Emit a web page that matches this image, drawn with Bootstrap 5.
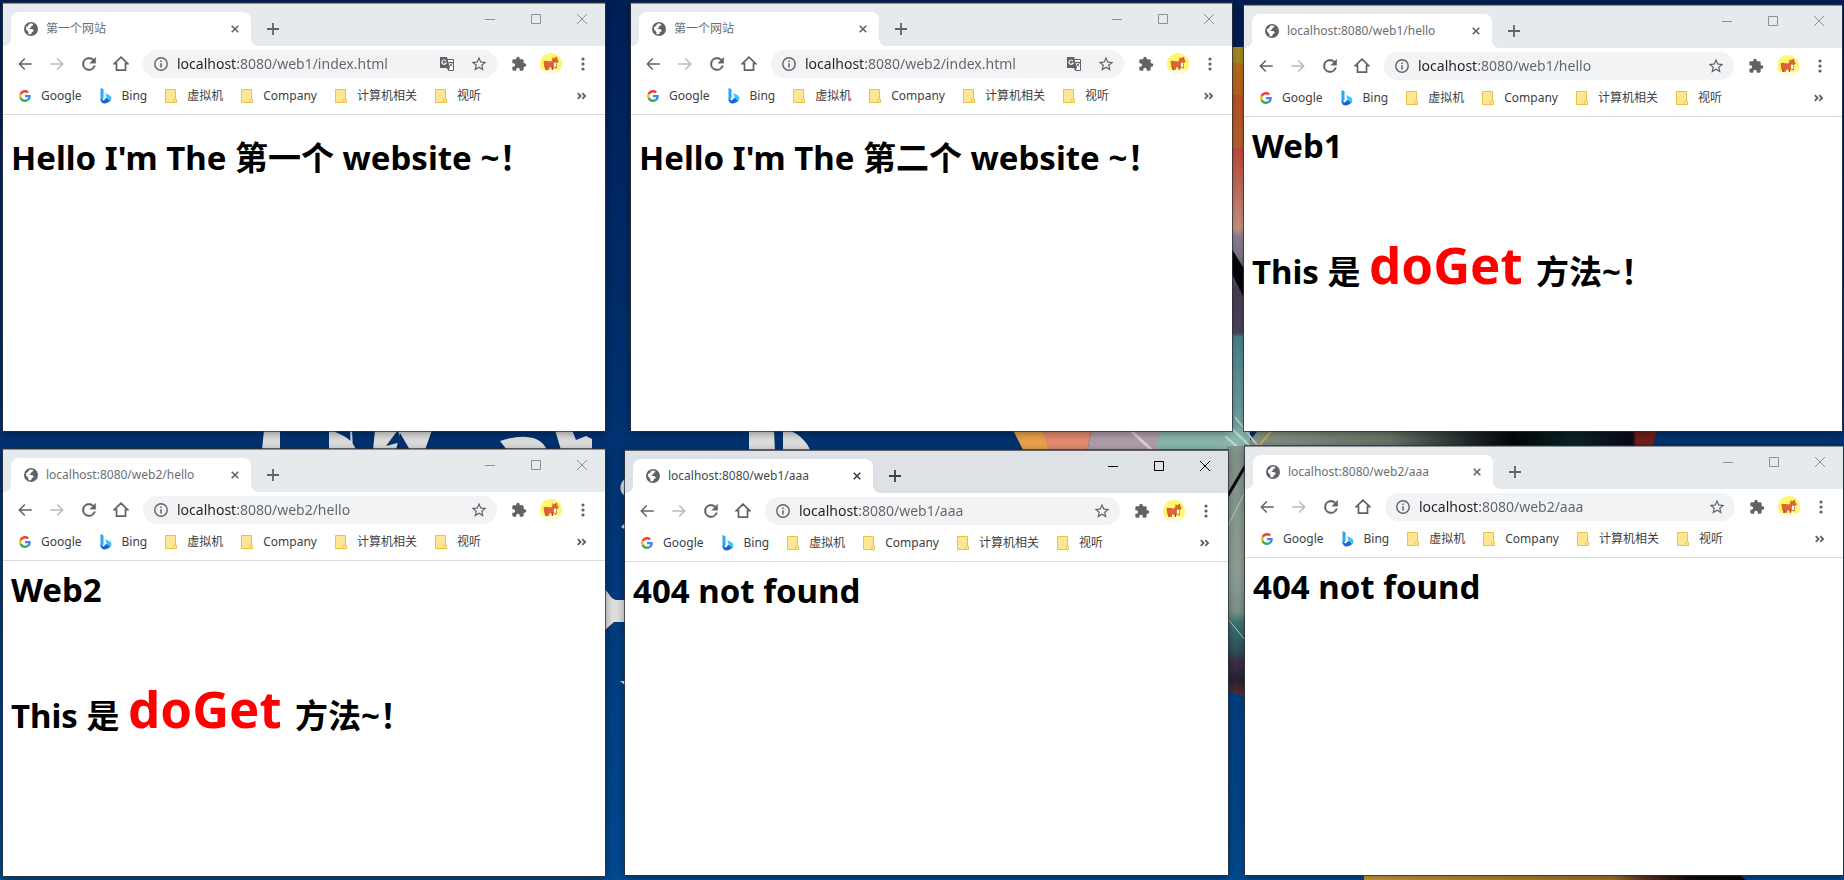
<!DOCTYPE html>
<html lang="zh-CN">
<head>
<meta charset="utf-8">
<meta name="viewport" content="width=device-width, initial-scale=1">
<title>Desktop</title>
<link rel="stylesheet" href="https://cdn.jsdelivr.net/npm/bootstrap@5.3.0/dist/css/bootstrap.min.css">
<style>
body{font-family:"Noto Sans","Noto Sans CJK SC",sans-serif;background:linear-gradient(#001f57,#003170 45%,#004b92)}
.desktop{min-height:100vh;display:grid;grid-template-rows:431fr 449fr;isolation:isolate}
.wallpaper{z-index:-1}
.line-one{padding:3px 2px 0 3px}
.line-two{padding:15px 1px 4px 3px}
.window{background:#fff;border-top:1px solid #8b9299;box-shadow:0 0 0 1px rgba(45,50,55,.75),0 2px 10px rgba(0,0,0,.45);flex:602 1 0}
.w2{flex-grow:601;margin-left:26px}
.w3{flex-grow:598;margin:2px 0 0 12px}
.w4{margin-top:3px}
.w5{flex-grow:603;margin:4px 0 1px 20px}
.w6{flex-grow:598;margin:0 0 1px 17px}
.titlebar{background:#e7eaed;height:42px;padding-left:8px}
.focused{border-top-color:#5d6266}
.focused .titlebar{background:#dee1e6}
.tab{width:240px;height:34px;margin-top:8px;padding:0 11px 0 13px;background:#fff;border-radius:8px 8px 0 0;font-size:12px;line-height:16px;color:#6b6f73}
.tab::before,.tab::after{content:"";position:absolute;bottom:0;width:8px;height:8px}
.tab::before{left:-8px;background:radial-gradient(circle at 0 0,transparent 8px,#fff 8px)}
.tab::after{right:-8px;background:radial-gradient(circle at 100% 0,transparent 8px,#fff 8px)}
.focused .tab{color:#45494d}
.plain{border:0;padding:0;background:none;color:#5f6368;display:flex;align-items:center;justify-content:center;flex:none;width:28px;height:28px}
.tab .plain{width:10px;height:16px}
.focused .titlebar .plain{color:#3c4043}
.newtab{margin:11px 0 0 8px}
.caption .plain{width:46px;height:30px;color:#8c9094}
.focused .caption .plain{color:#000}
.toolbar{padding:4px 8px;height:36px}
.toolbar .faded{color:#b9bbbe}
.address{height:28px;border-radius:14px;background:#f1f3f4;margin:0 4px;padding:0 4px 0 11px}
.address input{border:0;outline:0;padding:0 0 2px 1px;min-width:0;height:28px;font-size:14px;line-height:20px;color:#5f6368;-webkit-text-fill-color:transparent;background:linear-gradient(90deg,#202124 61px,#5f6368 61px);-webkit-background-clip:text;background-clip:text}
.bookmarks{height:33px;padding:0 9px 4px 14px;border-bottom:1px solid #d8dadd;font-size:12px;line-height:16px}
.bookmarks a{color:#3c4043;text-decoration:none;gap:8px}
.site{color:#000;padding:7px 8px 0}
.site h1,.site p{font-size:33px;line-height:44px;font-weight:700;margin:0}
.site.intro{padding-top:21px}
.site p{margin-top:74px}
.site .verb{font-size:51px;color:#f00}
svg{display:block;flex:none}
</style>
</head>
<body>
<svg width="0" height="0" class="position-absolute" aria-hidden="true">
  <symbol id="globe" viewBox="0 0 14 14"><circle cx="7" cy="7" r="7" fill="#5f6368"/><path fill="#fff" d="M5.600 1.800c1.400-.5 2.700-.2 3.700.3L8.800 3.500 7.300 4l-.2 1.400-1.600.5.3 1 2.400.1 1.500 1.300-.4 1.200-1.500.5-.5 2c-1 .4-2.100.3-3-.1l.3-1.300-.7-1.200L2 7.300c-.1-1 .1-2 .5-2.900L4 4.300l.6-1.500z"/><path fill="#5f6368" d="M8.500 4.500 10 3.300l2 .6.8 3.500-2.300.4-1.300-1.500z"/></symbol>
  <symbol id="close" viewBox="0 0 8 8"><path d="m.7.7 6.600 6.600m0-6.600L.7 7.300" stroke="currentColor" stroke-width="1.600"/></symbol>
  <symbol id="plus" viewBox="0 0 12 12"><path d="M6 0v12M0 6h12" stroke="currentColor" stroke-width="1.800"/></symbol>
  <symbol id="min" viewBox="0 0 10 10"><path d="M0 5.500h10" stroke="currentColor"/></symbol>
  <symbol id="max" viewBox="0 0 10 10"><path d="M.5.5h9v9h-9z" fill="none" stroke="currentColor"/></symbol>
  <symbol id="shut" viewBox="0 0 10 10"><path d="m0 0 10 10M10 0 0 10" stroke="currentColor"/></symbol>
  <symbol id="back" viewBox="0 0 24 24"><path fill="currentColor" d="M21 11H6.830l5.590-5.590L11 4l-8 8 8 8 1.410-1.410L6.830 13H21z"/></symbol>
  <symbol id="forward" viewBox="0 0 24 24"><path fill="currentColor" d="M3 11h14.170l-5.590-5.590L13 4l8 8-8 8-1.410-1.410L17.170 13H3z"/></symbol>
  <symbol id="reload" viewBox="0 0 24 24"><path fill="currentColor" stroke="currentColor" stroke-width=".5" d="M17.650 6.350A7.960 7.960 0 0 0 12 4a8 8 0 1 0 7.730 10h-2.080A6 6 0 1 1 12 6c1.660 0 3.140.69 4.220 1.780L13 11h7V4z"/></symbol>
  <symbol id="home" viewBox="0 0 16 16"><path d="M8 1.200 1.300 7.600H3.500V14.200h9V7.600h2.200z" fill="none" stroke="currentColor" stroke-width="1.700"/></symbol>
  <symbol id="info" viewBox="0 0 14 14"><circle cx="7" cy="7" r="6.200" fill="none" stroke="#5f6368" stroke-width="1.400"/><path d="M7 6.200v4.200M7 3.500v1.500" stroke="#5f6368" stroke-width="1.500"/></symbol>
  <symbol id="star" viewBox="0 0 24 24"><path fill="currentColor" d="m22 9.240-7.190-.62L12 2 9.190 8.630 2 9.240l5.460 4.730L5.820 21 12 17.270 18.180 21l-1.630-7.030zM12 15.400l-3.760 2.270 1-4.280-3.320-2.880 4.380-.38L12 6.100l1.710 4.040 4.380.38-3.320 2.880 1 4.280z"/></symbol>
  <symbol id="piece" viewBox="0 0 24 24"><path fill="currentColor" d="M20.500 11H19V7a2 2 0 0 0-2-2h-4V3.500a2.500 2.500 0 0 0-5 0V5H4a2 2 0 0 0-2 2v3.800h1.500a2.700 2.700 0 0 1 0 5.400H2V20a2 2 0 0 0 2 2h3.800v-1.500a2.700 2.700 0 0 1 5.400 0V22H17a2 2 0 0 0 2-2v-4h1.500a2.500 2.500 0 0 0 0-5z"/></symbol>
  <symbol id="dots" viewBox="0 0 4 14"><g fill="currentColor"><circle cx="2" cy="2" r="1.600"/><circle cx="2" cy="7" r="1.600"/><circle cx="2" cy="12" r="1.600"/></g></symbol>
  <symbol id="translate" viewBox="0 0 14 14"><path fill="#fff" stroke="#5f6368" d="M6 2.500h7.500v11H8.500z"/><path fill="#5f6368" d="M0 0h7l3 11H0z"/><path d="M6 4A2.200 2.200 0 1 0 6.200 6H4.500" fill="none" stroke="#f1f3f4" stroke-width="1.200"/><path d="M8.500 5.500h4.500m-2.200-1v1m1.400 0c-.3 1.800-1.300 3-2.700 4m.2-2.800 2.500 2.800" fill="none" stroke="#5f6368"/><path fill="#5f6368" d="m6.500 11 2.300 2.500.9-2.500z"/></symbol>
  <symbol id="dog" viewBox="0 0 22 22"><circle cx="11" cy="11" r="11" fill="#fff672"/><path fill="#fffbe0" d="M1.600 17h18.800A11 11 0 0 1 1.600 17z"/><path fill="#db6435" d="M3.500 8.500 5 7.700l6 .8 1.300-1.500.2-3 1.500 1.200L17 3.500l.6 3.200 1.200 1.800-1.800 1.400-.2 5-1.600.6-1-1.200-4 .2-.8-.3-1 3.300-2 .3-.5-2.500-1.600-1z"/><path fill="#fff" d="m14.300 9.500 2 .3-.2 4-1.600.4-.8-2.200zM12.500 16l2-.2v2.400h-2zm-6 .8H8v1.400H6.500z"/><path fill="#b6451c" d="m11.500 13.500 2 .3-.4 3.200-1.300-.2zM5.500 14l1.600.3-.6 2.700H5.200z"/></symbol>
  <symbol id="google" viewBox="-8 -8 64 64"><path fill="#EA4335" d="M24 9.500c3.540 0 6.710 1.220 9.210 3.600l6.850-6.850C35.900 2.380 30.470 0 24 0 14.620 0 6.510 5.380 2.560 13.220l7.980 6.190C12.430 13.720 17.740 9.500 24 9.500z"/><path fill="#4285F4" d="M46.980 24.550c0-1.570-.15-3.090-.38-4.550H24v9.020h12.940c-.58 2.960-2.260 5.480-4.780 7.180l7.730 6c4.510-4.180 7.090-10.360 7.090-17.650z"/><path fill="#FBBC05" d="M10.530 28.590a14.500 14.500 0 0 1 0-9.180l-7.980-6.190a24 24 0 0 0 0 21.560z"/><path fill="#34A853" d="M24 48c6.480 0 11.930-2.130 15.890-5.810l-7.730-6c-2.150 1.450-4.920 2.300-8.160 2.300-6.260 0-11.570-4.220-13.470-9.910l-7.980 6.190C6.510 42.620 14.620 48 24 48z"/></symbol>
  <symbol id="bing" viewBox="0 0 16 16"><path fill="#2ba5f7" d="m2.500 0 3 1.200v9.300l-3 2.300z"/><path fill="#1b63d8" d="M2.500 10.500c0 3 1.500 5 4 5 2 0 5-1.500 6.500-3.500L9 9.500l-3.500 3z"/><path fill="#3cc4f5" d="m7.200 5 4.300 2.200c2.500 1.400 2.500 4.300.3 5.800L8.700 9.800z"/></symbol>
  <symbol id="folder" viewBox="0 0 16 16"><path fill="#ffe693" stroke="#e9c243" d="M2.500 1.500h10v9.300l.9.400v3.300H2.500z"/><path fill="#fff0b8" stroke="#e9c243" d="M10.800 14.500v-3l1.300-.9 1.200.9v3z"/></symbol>
  <symbol id="more" viewBox="0 0 10 8"><path d="m.8 1.200 2.800 2.800-2.800 2.800M5.300 1.200 8.100 4 5.300 6.800" fill="none" stroke="currentColor" stroke-width="1.900"/></symbol>
</svg>

<main class="desktop position-relative">
  <svg class="wallpaper position-absolute w-100 h-100" viewBox="0 0 1844 880" preserveAspectRatio="none" aria-hidden="true">
    <defs>
      <linearGradient id="fan" x1="0" y1="47" x2="0" y2="450" gradientUnits="userSpaceOnUse"><stop offset="0" stop-color="#b39424"/><stop offset=".04" stop-color="#b39424"/><stop offset=".04" stop-color="#c8761f"/><stop offset=".12" stop-color="#c9691f"/><stop offset=".12" stop-color="#c95a25"/><stop offset=".25" stop-color="#c76b32"/><stop offset=".25" stop-color="#d0503e"/><stop offset=".45" stop-color="#dba08c"/><stop offset=".47" stop-color="#9c8ba0"/><stop offset=".52" stop-color="#8d7f92"/><stop offset=".6" stop-color="#4d435b"/><stop offset=".71" stop-color="#534a63"/><stop offset=".72" stop-color="#4c8e98"/><stop offset="1" stop-color="#8db9b5"/></linearGradient>
      <linearGradient id="wing" x1="0" y1="446" x2="0" y2="698" gradientUnits="userSpaceOnUse"><stop offset="0" stop-color="#83968c"/><stop offset=".5" stop-color="#94a49a"/><stop offset=".66" stop-color="#81958d"/><stop offset=".7" stop-color="#3d7878"/><stop offset=".82" stop-color="#2d5258"/><stop offset=".85" stop-color="#40334a"/><stop offset=".93" stop-color="#2b2237"/><stop offset="1" stop-color="#62342d"/></linearGradient>
      <linearGradient id="dark"><stop offset="0" stop-color="#8b9b8c"/><stop offset=".35" stop-color="#6c786c"/><stop offset=".55" stop-color="#20282a"/><stop offset=".65" stop-color="#050808"/><stop offset=".8" stop-color="#0d2529"/><stop offset=".94" stop-color="#090b18"/><stop offset=".95" stop-color="#761f1d"/></linearGradient>
      <linearGradient id="gold"><stop offset="0" stop-color="#d6a43b"/><stop offset=".65" stop-color="#a7792a"/><stop offset=".74" stop-color="#5f3027"/><stop offset=".85" stop-color="#140d0c"/><stop offset="1" stop-color="#080706"/></linearGradient>
    </defs>
    <path fill="url(#fan)" d="M1230 47h16v404h-16z"/>
    <path fill="#080808" d="M1230 246 1246 272v30l-16-32z"/>
    <path fill="#eea64b" d="M1012 428h32l6 24h-26z"/><path fill="#e98d73" d="M1042 428h50l-5 24h-38z"/><path fill="#b1a1ae" d="M1092 428h70l-4 24h-71z"/><path fill="#8bb8af" d="M1160 428h90v24h-93z"/>
    <path stroke="#e3d4d0" stroke-width="3" d="m1128 428 26 24"/>
    <path fill="url(#dark)" d="M1260 428h397l-4 19h-408z"/><path stroke="#d6ad61" stroke-width="2" d="m1272 430-14 17"/>
    <path stroke="#c5dbd2" stroke-width="2" d="m1228 425 25 24m-18-32 22 28m-32-9 18 16"/>
    <path fill="url(#wing)" d="M1227 446h20v252l-20-8z"/><path stroke="#080808" stroke-width="3" d="m1247 463-20 34"/>
    <path stroke="#c9d0be" d="m1245 492-17 34m0 93 18 22"/>
    <path fill="url(#gold)" d="M1364 872h372l10 8h-382z"/>
    <g fill="#e3e3e3"><path d="M264 430h16v20h-18zM329 430c14 4 24 10 27 20h-27zM350 430h2l1 20h-2zM375 430h57l-7 20h-15l-10-17-4 17h-23zM500 441c17-6 40-8 47 9h-40zM555 430h17l4 10 10-4 6 3v11h-31zM749 430h25l1 22h-26zM783 430h5c12 4 20 13 23 22h-28zM605 590c4 2 5 9 11 10h10v22h-12l-9 8zM626 478c-7 4-7 14-2 17zM626 522l-5 5 5 3zM620 681h6v5z"/><path fill="#003572" d="m398 430 3 12-15 4z"/></g>
  </svg>
  <div class="line-one d-flex" id="upper"></div>
  <div class="line-two d-flex" id="lower"></div>
</main>

<script>
const icon = (id, w, h = w) => `<svg width="${w}" height="${h}" aria-hidden="true"><use href="#${id}"/></svg>`;
const button = (label, id, w, h, cls = '') => `<button type="button" class="plain ${cls}" aria-label="${label}">${icon(id, w, h)}</button>`;
const bookmarks = [['Google','google'],['Bing','bing'],['虚拟机','folder'],['Company','folder'],['计算机相关','folder'],['视听','folder']];
const hello = n => `<div class="site"><h1>Web${n}</h1><p>This 是 <span class="verb">doGet </span>方法~！</p></div>`;
const missing = '<div class="site"><h1>404 not found</h1></div>';
const intro = s => `<div class="site intro"><h1>Hello I'm The ${s} website ~！</h1></div>`;
const windows = [
  {url:'web1/index.html', title:'第一个网站', body:intro('第一个'), translate:true},
  {url:'web2/index.html', title:'第一个网站', body:intro('第二个'), translate:true},
  {url:'web1/hello', body:hello(1)},
  {url:'web2/hello', body:hello(2)},
  {url:'web1/aaa', body:missing, focused:true},
  {url:'web2/aaa', body:missing}
];
windows.forEach((w, i) => {
  const url = 'localhost:8080/' + w.url;
  document.getElementById(i < 3 ? 'upper' : 'lower').insertAdjacentHTML('beforeend', `
  <section class="window w${i + 1} ${w.focused ? 'focused' : ''}">
    <div class="titlebar d-flex">
      <div class="tab position-relative d-flex align-items-center">${icon('globe', 14)}<span class="ms-2 flex-fill text-truncate">${w.title || url}</span>${button('Close tab', 'close', 8, 8)}</div>
      ${button('New tab', 'plus', 12, 12, 'newtab')}
      <div class="caption d-flex ms-auto">${button('Minimize', 'min', 10, 10)}${button('Maximize', 'max', 10, 10)}${button('Close', 'shut', 10, 10)}</div>
    </div>
    <div class="toolbar d-flex gap-1">
      ${button('Back', 'back', 18, 18)}${button('Forward', 'forward', 18, 18, 'faded')}${button('Reload', 'reload', 20, 20)}${button('Home', 'home', 16, 16)}
      <div class="address d-flex align-items-center flex-fill">${icon('info', 14)}<input class="flex-fill ms-2" type="text" aria-label="Address" value="${url}">${w.translate ? button('Translate', 'translate', 14, 14, 'me-1') : ''}${button('Bookmark', 'star', 18, 18)}</div>
      ${button('Extensions', 'piece', 16, 16)}${button('Profile', 'dog', 22, 22)}${button('Menu', 'dots', 4, 14)}
    </div>
    <nav class="bookmarks d-flex align-items-center gap-3">
      ${bookmarks.map(b => `<a href="#" class="d-flex align-items-center">${icon(b[1], 16)}${b[0]}</a>`).join('')}
      ${button('More bookmarks', 'more', 10, 8, 'ms-auto')}
    </nav>
    ${w.body}
  </section>`);
});
</script>
<script src="https://cdn.jsdelivr.net/npm/bootstrap@5.3.0/dist/js/bootstrap.bundle.min.js"></script>
</body>
</html>
